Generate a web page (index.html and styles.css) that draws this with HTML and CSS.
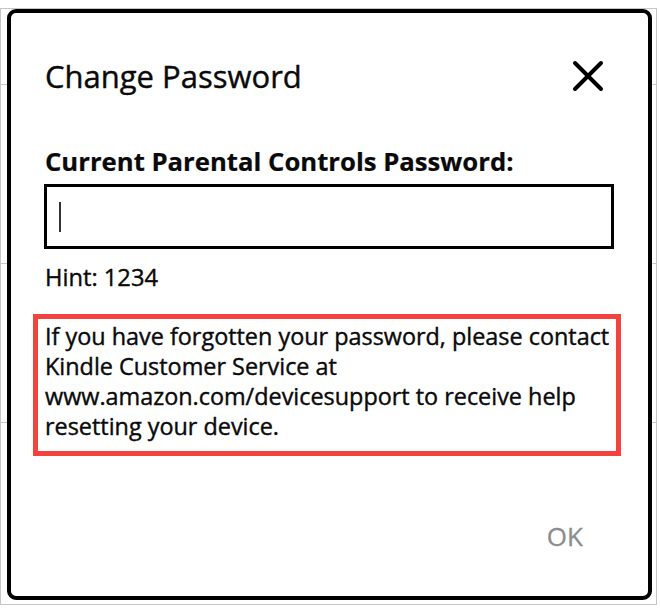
FILE: index.html
```html
<!DOCTYPE html>
<html lang="en">
<head>
<meta charset="utf-8">
<title>Change Password</title>
<link rel="stylesheet" href="styles.css">
</head>
<body>
<div class="screen">
  <div class="row row-1"></div>
  <div class="row row-2"></div>
  <div class="row row-3"></div>
</div>
<div class="dialog">
  <div class="header">
    <h1 class="title">Change Password</h1>
    <svg class="close" width="32" height="32" viewBox="0 0 32 32" aria-label="Close">
      <path d="M3 3 L29 29 M29 3 L3 29" stroke="#000" stroke-width="4" stroke-linecap="round" fill="none"/>
    </svg>
  </div>
  <div class="label">Current Parental Controls Password:</div>
  <div class="input"><span class="caret"></span></div>
  <div class="hint">Hint: 1234</div>
  <div class="notice">If you have forgotten your password, please contact<br>Kindle Customer Service at<br>www.amazon.com/devicesupport to receive help<br>resetting your device.</div>
  <div class="footer"><span class="ok">OK</span></div>
</div>
</body>
</html>
```
FILE: styles.css
```css
* { box-sizing: border-box; }
html, body { margin: 0; padding: 0; background: #fff; }
body {
  width: 660px;
  height: 609px;
  position: relative;
  overflow: hidden;
  font-family: "Open Sans", "Noto Sans", sans-serif;
  color: #0a0a0a;
  -webkit-text-stroke: 0.4px #0a0a0a;
}
.screen {
  margin-top: 8px;
  width: 657px;
  height: 597px;
  border: 1px solid #c6c6c6;
}
.row { border-bottom: 1px solid #c6c6c6; }
.row-1 { height: 76px; }
.row-2 { height: 179px; }
.row-3 { height: 159px; }

.dialog {
  position: absolute;
  left: 7px;
  top: 9px;
  width: 645px;
  height: 591px;
  background: #fff;
  border: 4px solid #000;
  border-radius: 9px;
  padding: 45px 0 0 0;
  display: flex;
  flex-direction: column;
}
.header {
  display: flex;
  align-items: center;
  justify-content: space-between;
  padding: 0 44px 0 34px;
  height: 36px;
}
.title {
  margin: 0;
  font-size: 31px;
  line-height: 36px;
  font-weight: 400;
}
.close { display: block; }
.label {
  margin: 51.5px 0 0 34px;
  font-size: 25.7px;
  line-height: 32px;
  font-weight: 700;
  -webkit-text-stroke: 0.2px #0a0a0a;
}
.input {
  margin: 6.5px 0 0 33px;
  width: 570px;
  height: 65px;
  border: 3px solid #000;
  display: flex;
  align-items: center;
  padding-left: 12px;
}
.caret {
  width: 1.5px;
  height: 30px;
  background: #333;
}
.hint {
  margin: 12.7px 0 0 34px;
  font-size: 23.7px;
  line-height: 30px;
}
.notice {
  margin: 22.3px 0 0 22px;
  width: 588px;
  height: 142px;
  border: 5px solid #f4433f;
  padding: 1.7px 0 0 7px;
  font-size: 23.4px;
  line-height: 30px;
  white-space: nowrap;
}
.footer {
  margin-top: 64px;
  display: flex;
  justify-content: flex-end;
  padding-right: 65px;
}
.ok {
  font-size: 26px;
  line-height: 32px;
  color: #8c8c8c;
  -webkit-text-stroke: 0.3px #8c8c8c;
}
```
